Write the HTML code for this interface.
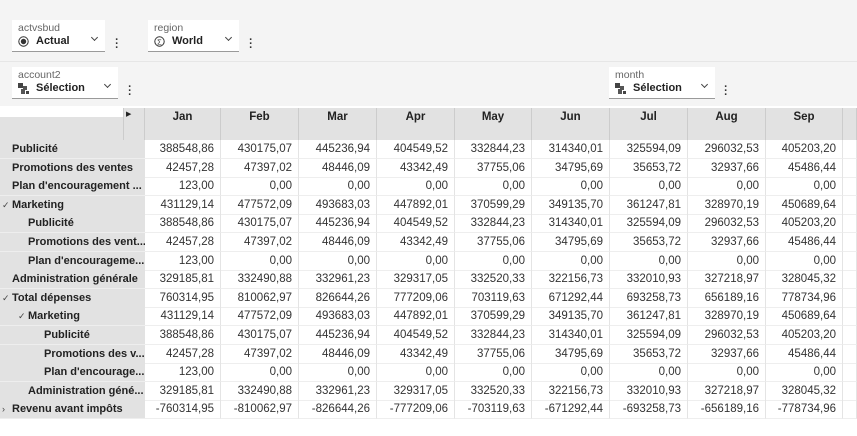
<!DOCTYPE html>
<html><head><meta charset="utf-8"><style>
*{margin:0;padding:0;box-sizing:border-box}
body{width:857px;height:436px;overflow:hidden;background:#fff;font-family:"Liberation Sans",sans-serif;position:relative;color:#222}
.top{position:absolute;left:0;top:0;width:857px;height:106px;background:#f4f4f4}
.sep{position:absolute;left:0;top:61px;width:857px;height:1px;background:#e6e6e6}
.f{position:absolute;background:#fff;height:32px;border-bottom:1px solid #9a9a9a}
.f .l{position:absolute;left:6px;top:2px;font-size:10.5px;color:#666}
.f .v{position:absolute;left:24px;top:15px;font-size:11px;font-weight:bold;color:#222}
.f .ic{position:absolute;left:6px;top:16px;width:11px;height:11px}
.f .ch{position:absolute;right:8px;top:15px;width:5px;height:5px;border-right:1.2px solid #444;border-bottom:1.2px solid #444;transform:rotate(45deg)}
.dots{position:absolute;font-size:11px;font-weight:bold;color:#333;line-height:4px;width:4px;text-align:center}
.hdr{position:absolute;top:108px;height:32px;background:#e2e2e2;border-right:1px solid #ccc;font-size:11.5px;font-weight:bold;text-align:center;padding-top:3px;color:#222}
.rh{position:absolute;left:0;width:145px;height:19px;background:#e2e2e2;border-bottom:1px solid #eee;font-size:11px;font-weight:bold;white-space:nowrap;line-height:19px;color:#222;overflow:hidden}
.c{position:absolute;height:19px;border-right:1px solid #e4e4e4;border-bottom:1px solid #eee;font-size:11.5px;text-align:right;padding-right:6px;line-height:19px;color:#333}
.car{position:absolute;left:2px;font-size:9px;font-weight:normal;color:#444}
</style></head><body>
<div class="top"></div><div class="sep"></div>
<div class="f" style="left:12px;top:20px;width:93px"><span class="l">actvsbud</span>
<svg class="ic" viewBox="0 0 11 11"><circle cx="5.5" cy="5.5" r="4.7" fill="none" stroke="#333" stroke-width="1"/><circle cx="5.5" cy="5.5" r="2.7" fill="#333"/></svg>
<span class="v">Actual</span><span class="ch"></span></div>
<div class="dots" style="left:115px;top:38px">·<br>·<br>·</div>
<div class="f" style="left:148px;top:20px;width:91px"><span class="l">region</span>
<svg class="ic" viewBox="0 0 11 11"><circle cx="5.5" cy="5.5" r="4.7" fill="none" stroke="#333" stroke-width="1"/><text x="5.5" y="8.3" font-size="7.5" text-anchor="middle" fill="#333" font-family="Liberation Sans">Σ</text></svg>
<span class="v">World</span><span class="ch"></span></div>
<div class="dots" style="left:249px;top:38px">·<br>·<br>·</div>
<div class="f" style="left:12px;top:67px;width:106px"><span class="l">account2</span>
<svg class="ic" viewBox="0 0 11 11"><rect x="0" y="0" width="5" height="5" fill="#444"/><rect x="5" y="3" width="4" height="4" fill="#555"/><rect x="3" y="6" width="4" height="5" fill="#555"/><rect x="8" y="8" width="3" height="3" fill="#444"/></svg>
<span class="v">Sélection</span><span class="ch"></span></div>
<div class="dots" style="left:128px;top:85px">·<br>·<br>·</div>
<div class="f" style="left:609px;top:67px;width:106px"><span class="l">month</span>
<svg class="ic" viewBox="0 0 11 11"><rect x="0" y="0" width="5" height="5" fill="#444"/><rect x="5" y="3" width="4" height="4" fill="#555"/><rect x="3" y="6" width="4" height="5" fill="#555"/><rect x="8" y="8" width="3" height="3" fill="#444"/></svg>
<span class="v">Sélection</span><span class="ch"></span></div>
<div class="dots" style="left:724px;top:85px">·<br>·<br>·</div>

<div style="position:absolute;left:0;top:108px;width:122px;height:9px;background:#fff"></div>
<div style="position:absolute;left:0;top:117px;width:123px;height:23px;background:#e2e2e2"></div>
<div style="position:absolute;left:123px;top:108px;width:22px;height:32px;background:#e2e2e2;border-right:1px solid #ccc;border-left:1px solid #ccc"></div>
<div style="position:absolute;left:126px;top:110px;font-size:7px;color:#222">▶</div>
<div id="t"></div>
<script>
var cols=[145,221,299,377,455,532,610,688,766,843,857];
var mon=["Jan","Feb","Mar","Apr","May","Jun","Jul","Aug","Sep",""];
var h="";
for(var i=0;i<10;i++)h+='<div class="hdr" style="left:'+cols[i]+'px;width:'+(cols[i+1]-cols[i])+'px">'+mon[i]+'</div>';
var rows=[
[12,"","Publicité","388548,86 430175,07 445236,94 404549,52 332844,23 314340,01 325594,09 296032,53 405203,20"],
[12,"","Promotions des ventes","42457,28 47397,02 48446,09 43342,49 37755,06 34795,69 35653,72 32937,66 45486,44"],
[12,"","Plan d'encouragement ...","123,00 0,00 0,00 0,00 0,00 0,00 0,00 0,00 0,00"],
[12,"✓","Marketing","431129,14 477572,09 493683,03 447892,01 370599,29 349135,70 361247,81 328970,19 450689,64"],
[28,"","Publicité","388548,86 430175,07 445236,94 404549,52 332844,23 314340,01 325594,09 296032,53 405203,20"],
[28,"","Promotions des vent...","42457,28 47397,02 48446,09 43342,49 37755,06 34795,69 35653,72 32937,66 45486,44"],
[28,"","Plan d'encourageme...","123,00 0,00 0,00 0,00 0,00 0,00 0,00 0,00 0,00"],
[12,"","Administration générale","329185,81 332490,88 332961,23 329317,05 332520,33 322156,73 332010,93 327218,97 328045,32"],
[12,"✓","Total dépenses","760314,95 810062,97 826644,26 777209,06 703119,63 671292,44 693258,73 656189,16 778734,96"],
[28,"✓","Marketing","431129,14 477572,09 493683,03 447892,01 370599,29 349135,70 361247,81 328970,19 450689,64"],
[44,"","Publicité","388548,86 430175,07 445236,94 404549,52 332844,23 314340,01 325594,09 296032,53 405203,20"],
[44,"","Promotions des v...","42457,28 47397,02 48446,09 43342,49 37755,06 34795,69 35653,72 32937,66 45486,44"],
[44,"","Plan d'encourage...","123,00 0,00 0,00 0,00 0,00 0,00 0,00 0,00 0,00"],
[28,"","Administration géné...","329185,81 332490,88 332961,23 329317,05 332520,33 322156,73 332010,93 327218,97 328045,32"],
[12,"›","Revenu avant impôts","-760314,95 -810062,97 -826644,26 -777209,06 -703119,63 -671292,44 -693258,73 -656189,16 -778734,96"]];
for(var r=0;r<rows.length;r++){
 var y=140+r*18.6, R=rows[r];
 var cl=R[1]?'<span class="car" style="left:'+(R[0]-10)+'px">'+R[1]+'</span>':'';
 h+='<div class="rh" style="top:'+y+'px">'+cl+'<span style="position:absolute;left:'+R[0]+'px">'+R[2]+'</span></div>';
 var v=R[3].split(" ");v.push("");
 for(var i=0;i<10;i++)h+='<div class="c" style="top:'+y+'px;left:'+cols[i]+'px;width:'+(cols[i+1]-cols[i])+'px">'+v[i]+'</div>';
}
document.getElementById("t").innerHTML=h;
</script>
</body></html>
